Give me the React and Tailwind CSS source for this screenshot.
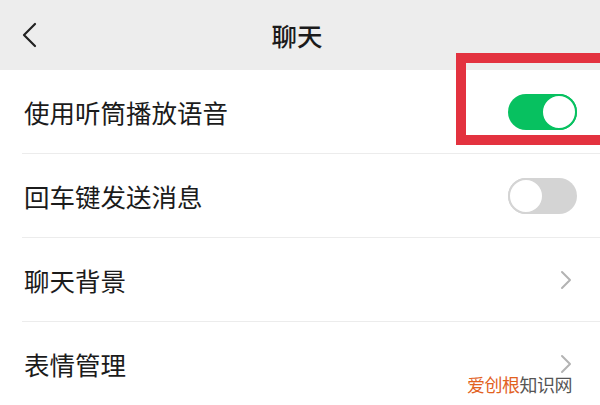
import React from "react";

const font = { fontFamily: '"Noto Sans CJK SC", "Noto Sans", sans-serif' };

function Toggle({ on }) {
  return (
    <div
      className={`relative h-[36px] w-[69px] rounded-full ${on ? "bg-[#07c160]" : "bg-[#d4d4d4]"}`}
    >
      <div
        className={`absolute top-0 h-[36px] w-[36px] rounded-full bg-white border-[2px] ${
          on ? "right-0 border-[#07c160]" : "left-0 border-[#d4d4d4]"
        }`}
      />
    </div>
  );
}

function Chevron() {
  return (
    <svg width="14" height="20" viewBox="0 0 14 20" fill="none">
      <path d="M3 2 L11 10 L3 18" stroke="#b3b3b3" strokeWidth="2" strokeLinecap="round" strokeLinejoin="round" />
    </svg>
  );
}

function Row({ label, right, divider = true }) {
  return (
    <div className="h-[84px] flex flex-col bg-white">
      <div className="flex-1 flex items-center justify-between pl-[24px] pr-[23px]">
        <span className="text-[25.5px] text-[#1b1b1b] leading-none">{label}</span>
        {right}
      </div>
      {divider && <div className="ml-[22px] h-px bg-[#ececec]" />}
    </div>
  );
}

export default function App() {
  return (
    <div className="relative w-[600px] h-[405px] overflow-hidden bg-white" style={font}>
      <div className="relative h-[70px] bg-[#ededed] flex items-center justify-center pr-[6px]">
        <svg className="absolute left-[20px] top-[22px]" width="20" height="26" viewBox="0 0 20 26" fill="none">
          <path d="M15 2 L4 13 L15 24" stroke="#222" strokeWidth="2.2" strokeLinecap="round" strokeLinejoin="round" />
        </svg>
        <span className="text-[25.5px] font-medium text-[#1b1b1b] leading-none">聊天</span>
      </div>

      <Row label="使用听筒播放语音" right={<Toggle on />} />
      <Row label="回车键发送消息" right={<Toggle />} />
      <Row label="聊天背景" right={<div className="pr-[4px]"><Chevron /></div>} />
      <Row label="表情管理" right={<div className="pr-[4px]"><Chevron /></div>} divider={false} />

      {/* highlight frame around the switch */}
      <div className="absolute left-[456px] top-[53px] w-[156px] h-[92px] border-[10px] border-[#e3323f]" />

      <div className="absolute left-[467px] top-[375px] text-[18px] leading-none tracking-[-0.5px]">
        <span className="text-[#e2621f]">爱创根</span>
        <span className="text-[#555]">知识网</span>
      </div>
    </div>
  );
}
